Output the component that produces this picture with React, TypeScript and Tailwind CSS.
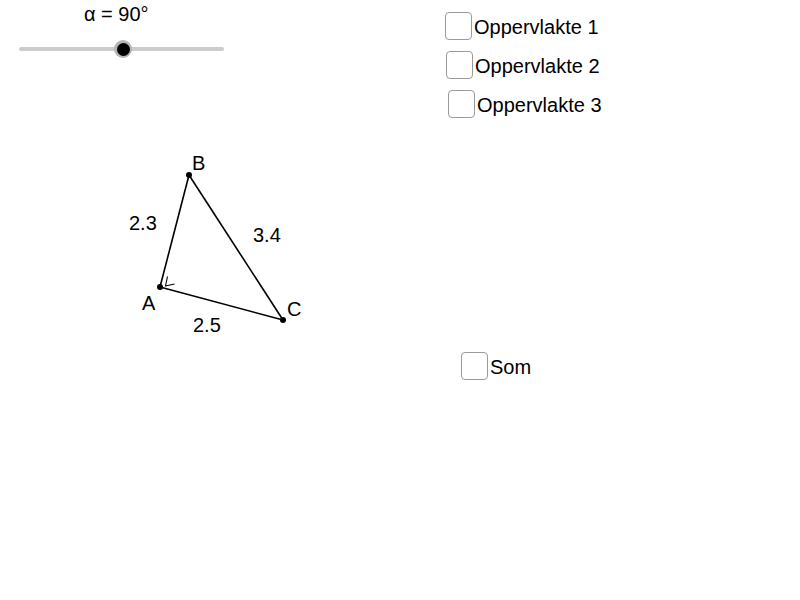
import React from "react";

const font = { fontFamily: '"Liberation Sans", Arial, sans-serif' };

const boxes = [
  { left: 445, top: 12, label: "Oppervlakte 1" },
  { left: 446, top: 51, label: "Oppervlakte 2" },
  { left: 448, top: 90, label: "Oppervlakte 3" },
  { left: 461, top: 352, label: "Som" },
];

const Check = ({ left, top, label }: { left: number; top: number; label: string }) => (
  <label className="absolute flex items-center gap-[2px] cursor-pointer" style={{ left, top }}>
    <span className="block w-[27px] h-[28px] rounded-[4px] border-[1.5px] border-[#9a9a9a] bg-white" />
    <span className="text-[20px] leading-none text-black pt-[2px]">{label}</span>
  </label>
);

export default function App() {
  return (
    <div className="relative w-[800px] h-[600px] bg-white overflow-hidden text-black" style={font}>
      {/* slider */}
      <div className="absolute left-[84px] top-[4px] text-[20px] leading-none">α = 90°</div>
      <div className="absolute left-[19px] top-[47px] w-[205px] h-[4px] rounded-full bg-[#cccccc]" />
      <div className="absolute left-[114px] top-[40px] w-[18px] h-[18px] rounded-full bg-[#b5b5b5] flex items-center justify-center">
        <div className="w-[13px] h-[13px] rounded-full bg-black" />
      </div>

      {/* triangle */}
      <svg className="absolute left-0 top-0" width="800" height="600">
        <g stroke="black" strokeWidth="1.6" fill="none" strokeLinejoin="round">
          <line x1="160" y1="287" x2="189" y2="175" />
          <line x1="189" y1="175" x2="283" y2="320" />
          <line x1="160" y1="287" x2="283" y2="320" />
          <polyline points="167.5,276.5 165.5,286 174.5,284" strokeWidth="1.1" />
        </g>
        <circle cx="160" cy="287" r="3" fill="black" />
        <circle cx="189" cy="175" r="3" fill="black" />
        <circle cx="283" cy="320" r="3" fill="black" />
        <g fontSize="20" fill="black" style={font}>
          <text x="192" y="170">B</text>
          <text x="142" y="310">A</text>
          <text x="287" y="316">C</text>
          <text x="129" y="230">2.3</text>
          <text x="253" y="242">3.4</text>
          <text x="193" y="332">2.5</text>
        </g>
      </svg>

      {boxes.map((b) => (
        <Check key={b.label} {...b} />
      ))}
    </div>
  );
}
